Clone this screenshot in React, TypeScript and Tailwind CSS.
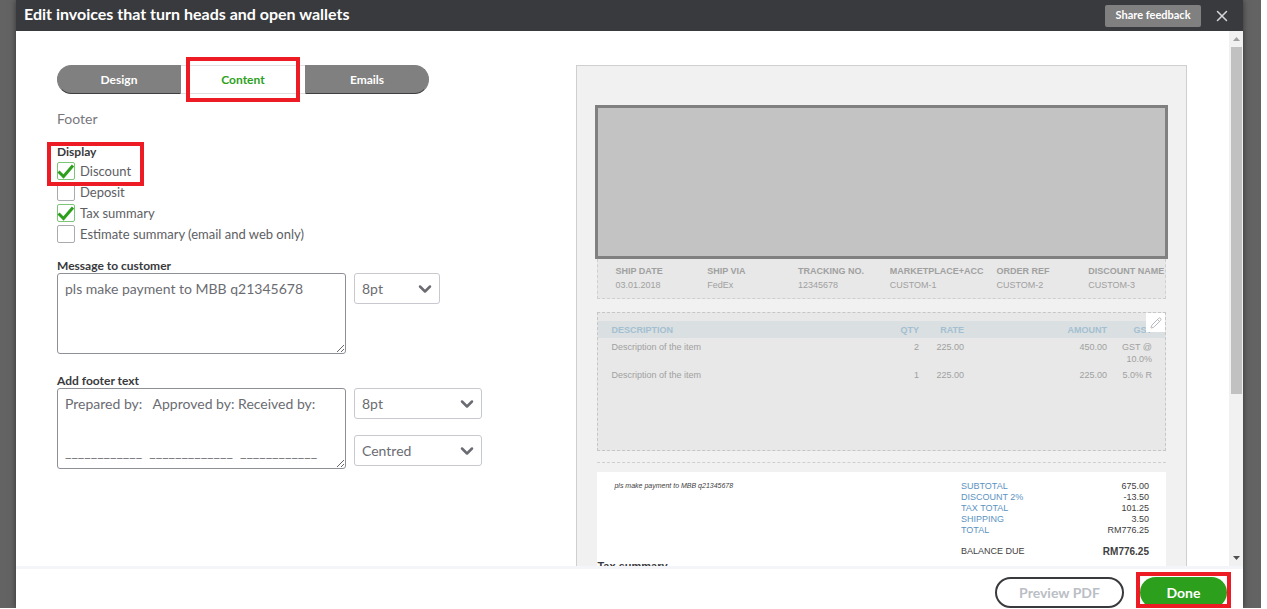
import { useState } from "react";
import { ChevronDown, Pencil, X } from "lucide-react";

const TABS = ["Design", "Content", "Emails"];

const DISPLAY_OPTIONS = [
  { id: "discount", label: "Discount", on: true },
  { id: "deposit", label: "Deposit", on: false },
  { id: "tax", label: "Tax summary", on: true },
  { id: "estimate", label: "Estimate summary (email and web only)", on: false },
];

const SHIPPING = [
  ["SHIP DATE", "03.01.2018"],
  ["SHIP VIA", "FedEx"],
  ["TRACKING NO.", "12345678"],
  ["MARKETPLACE+ACC", "CUSTOM-1"],
  ["ORDER REF", "CUSTOM-2"],
  ["DISCOUNT NAME", "CUSTOM-3"],
];

const ITEMS = [
  ["Description of the item", "2", "225.00", "450.00", "GST @ 10.0%"],
  ["Description of the item", "1", "225.00", "225.00", "5.0% R"],
];

const TOTALS = [
  ["SUBTOTAL", "675.00"],
  ["DISCOUNT 2%", "-13.50"],
  ["TAX TOTAL", "101.25"],
  ["SHIPPING", "3.50"],
  ["TOTAL", "RM776.25"],
];

const FOOTER_TEXT =
  "Prepared by:   Approved by: Received by:\n\n____________  _____________  ____________";

function Highlight({ className }: { className: string }) {
  return (
    <span
      aria-hidden="true"
      className={`pointer-events-none absolute z-10 border-4 border-[#ed1c24] ${className}`}
    />
  );
}

function Dropdown({
  label,
  options,
  className,
}: {
  label: string;
  options: string[];
  className: string;
}) {
  return (
    <div className={`relative ${className}`}>
      <select
        aria-label={label}
        className="h-[31px] w-full appearance-none rounded-[3px] border border-[#c7c9cf] bg-white px-[7px] text-sm text-[#6b6c72]"
      >
        {options.map((option) => (
          <option key={option}>{option}</option>
        ))}
      </select>
      <ChevronDown
        className="pointer-events-none absolute right-[5px] top-1.5 text-[#6b6c72]"
        size={20}
        strokeWidth={3}
      />
    </div>
  );
}

function DisplayOption({ id, label, on }: { id: string; label: string; on: boolean }) {
  const [checked, setChecked] = useState(on);

  return (
    <div className="flex h-[21px] items-center gap-[5px]">
      <span className="relative h-[18px] w-[18px]">
        <input
          id={id}
          type="checkbox"
          checked={checked}
          onChange={() => setChecked(!checked)}
          className="block h-[18px] w-[18px] appearance-none rounded-[2px] border border-[#a9abb0] bg-white checked:border-[#7cc576]"
        />
        {checked && (
          <svg
            viewBox="0 0 18 18"
            className="pointer-events-none absolute inset-0 h-full w-full"
            fill="none"
            stroke="#2ca01c"
            strokeWidth="3"
          >
            <path d="M1.5 9.5 6.5 14.5 16 3.5" />
          </svg>
        )}
      </span>
      <label htmlFor={id} className="text-[13px] leading-4 text-[#5d5e63]">
        {label}
      </label>
    </div>
  );
}

function Editor() {
  const [tab, setTab] = useState("Content");

  return (
    <div className="pt-[34px]">
      <div className="flex h-[29px] w-[372px]">
        {TABS.map((name) => (
          <div key={name} className="relative flex-1 first:[&>button]:rounded-l-full last:[&>button]:rounded-r-full">
            <button
              type="button"
              onClick={() => setTab(name)}
              className={
                name === tab
                  ? "h-full w-full border-y border-[#e0e0e0] bg-white text-xs font-bold text-[#2ca01c]"
                  : "h-full w-full border border-[#808080] border-b-[#3d3e42] bg-[#808080] text-xs font-bold text-white"
              }
            >
              {name}
            </button>
            {name === tab && <Highlight className="-top-2 -bottom-2 left-[5px] right-[5px]" />}
          </div>
        ))}
      </div>

      <h2 className="mt-4 text-sm leading-[18px] text-[#77787d]">Footer</h2>

      <div className="relative mt-4">
        <fieldset>
          <legend className="text-xs leading-4 font-bold text-[#393a3d]">Display</legend>
          {DISPLAY_OPTIONS.map((option) => (
            <DisplayOption key={option.id} {...option} />
          ))}
        </fieldset>
        <Highlight className="-top-[2px] -left-2.5 h-11 w-[97px]" />
      </div>

      <div className="mt-[15px]">
        <label htmlFor="message" className="block text-xs leading-[14px] font-bold text-[#393a3d]">
          Message to customer
        </label>
        <div className="flex items-start gap-2">
          <textarea
            id="message"
            defaultValue="pls make payment to MBB q21345678"
            className="h-[81px] w-[289px] rounded-[3px] border border-[#8d9096] px-[7px] pt-[3px] text-sm leading-6 text-[#6b6c72]"
          />
          <Dropdown label="Message text size" options={["8pt", "9pt", "10pt"]} className="w-[86px]" />
        </div>
      </div>

      <div className="mt-5">
        <label htmlFor="footer-text" className="block text-xs leading-[14px] font-bold text-[#393a3d]">
          Add footer text
        </label>
        <div className="flex items-start gap-2">
          <textarea
            id="footer-text"
            defaultValue={FOOTER_TEXT}
            className="h-[81px] w-[289px] overflow-hidden rounded-[3px] border border-[#8d9096] px-[7px] pt-[3px] text-sm leading-6 text-[#6b6c72]"
          />
          <div className="flex w-32 flex-col gap-4">
            <Dropdown label="Footer text size" options={["8pt", "9pt", "10pt"]} className="w-full" />
            <Dropdown label="Footer alignment" options={["Centred", "Left", "Right"]} className="w-full" />
          </div>
        </div>
      </div>
    </div>
  );
}

function Preview() {
  return (
    <div className="mt-[34px] border border-[#cfcfcf] bg-[#f1f1f1] px-[18px] pt-[39px] font-['Liberation_Sans',Arial,sans-serif] text-[9px] text-[#a0a0a0]">
      <div className="h-[154px] border-[3px] border-[#808080] bg-[#c3c3c3]" />

      <div className="mx-0.5">
        <dl className="grid h-10 grid-cols-[92fr_91fr_92fr_107fr_92fr_77fr] border border-t-0 border-dashed border-[#cfcfcf] bg-[#e8e8e8] pt-[5px] pl-[17px]">
          {SHIPPING.map(([name, value]) => (
            <div key={name} className="leading-[14px] whitespace-nowrap">
              <dt className="font-bold">{name}</dt>
              <dd>{value}</dd>
            </div>
          ))}
        </dl>

        <div className="relative mt-[13px] h-[139px] border border-dashed border-[#c6c6c6] bg-[#e8e8e8] pt-2">
          <table className="w-full table-fixed text-right leading-3">
            <colgroup>
              <col />
              <col className="w-[60px]" />
              <col className="w-[45px]" />
              <col className="w-[143px]" />
              <col className="w-[58px]" />
            </colgroup>
            <thead>
              <tr className="h-[17px] bg-[#dadfe1] text-[#a3bfd2]">
                <th className="pl-[13px] text-left">DESCRIPTION</th>
                <th>QTY</th>
                <th>RATE</th>
                <th>AMOUNT</th>
                <th className="pr-[13px]">GST</th>
              </tr>
            </thead>
            <tbody>
              {ITEMS.map(([name, qty, rate, amount, gst]) => (
                <tr key={qty} className="align-top">
                  <td className="pt-[3px] pl-[13px] text-left">{name}</td>
                  <td className="pt-[3px]">{qty}</td>
                  <td className="pt-[3px]">{rate}</td>
                  <td className="pt-[3px]">{amount}</td>
                  <td className="pt-[3px] pr-[13px] pb-px">{gst}</td>
                </tr>
              ))}
            </tbody>
          </table>
          <button
            type="button"
            aria-label="Edit items"
            className="absolute top-0 right-0 flex h-[19px] w-[19px] items-center justify-center bg-white text-[#b5b5bb]"
          >
            <Pencil size={12} strokeWidth={2} />
          </button>
        </div>

        <div className="mt-[11px] border-t border-dashed border-[#cfcfcf]" />

        <div className="mt-[9px] bg-white pt-[9px]">
          <div className="flex justify-between px-[17px] text-[#404040]">
            <p className="text-[7px] leading-[10px] italic">pls make payment to MBB q21345678</p>
            <dl className="w-[188px] leading-[11px]">
              {TOTALS.map(([name, value]) => (
                <div key={name} className="flex justify-between">
                  <dt className="text-[#5b93bf]">{name}</dt>
                  <dd>{value}</dd>
                </div>
              ))}
              <div className="mt-2.5 flex justify-between">
                <dt>BALANCE DUE</dt>
                <dd className="text-[10px] font-bold">RM776.25</dd>
              </div>
            </dl>
          </div>
          <h3 className="mt-px text-[11px] leading-4 font-bold text-[#393a3d]">Tax summary</h3>
        </div>
      </div>
    </div>
  );
}

function Scrollbar() {
  return (
    <div aria-hidden="true" className="flex w-3.5 flex-col items-center bg-[#f1f1f1]">
      <svg width="7" height="4" viewBox="0 0 7 4" className="my-1.5 shrink-0" fill="#a0a0a0">
        <path d="M0 4 3.5 0 7 4z" />
      </svg>
      <div className="flex w-full flex-1 flex-col items-center">
        <div className="h-[69%] w-[11px] bg-[#c1c1c1]" />
      </div>
      <svg width="7" height="4" viewBox="0 0 7 4" className="my-1.5 shrink-0" fill="#505050">
        <path d="M0 0h7L3.5 4z" />
      </svg>
    </div>
  );
}

export default function App() {
  return (
    <div className="h-screen overflow-hidden bg-white pr-1.5 pb-px font-[Lato,sans-serif]">
      <div className="h-full overflow-hidden bg-[#636363] pr-[18px] pl-4">
        <div
          role="dialog"
          aria-labelledby="title"
          className="flex h-full flex-col bg-white shadow-[0_0_6px_rgba(0,0,0,0.5)]"
        >
          <header className="flex h-[31px] shrink-0 items-center bg-[#393a3d] pr-3 pl-2">
            <h1 id="title" className="flex-1 pb-[3px] text-base leading-5 font-bold text-white">
              Edit invoices that turn heads and open wallets
            </h1>
            <button
              type="button"
              className="h-[22px] w-24 rounded-[2px] bg-[#808080] text-[11px] font-bold text-white"
            >
              Share feedback
            </button>
            <button type="button" aria-label="Close" className="ml-3 text-[#d4d7dc]">
              <X size={18} strokeWidth={2} />
            </button>
          </header>

          <main className="flex min-h-0 flex-1">
            <div className="grid min-w-0 flex-1 grid-cols-[519fr_610fr] overflow-hidden pr-[42px] pl-[41px]">
              <Editor />
              <Preview />
            </div>
            <Scrollbar />
          </main>

          <footer className="flex h-[42px] shrink-0 items-start justify-end gap-4 overflow-hidden border-t-[3px] border-[#f4f5f8] pt-2 pr-4">
            <button
              type="button"
              className="h-[31px] w-[129px] rounded-full border-2 border-[#393a3d] bg-white text-sm font-bold text-[#babec5]"
            >
              Preview PDF
            </button>
            <div className="relative">
              <button
                type="button"
                className="h-[31px] w-[87px] rounded-full bg-[#2ca01c] text-sm font-bold text-white"
              >
                Done
              </button>
              <Highlight className="-top-[5px] -right-1 -left-1 h-9" />
            </div>
          </footer>
        </div>
      </div>
    </div>
  );
}
